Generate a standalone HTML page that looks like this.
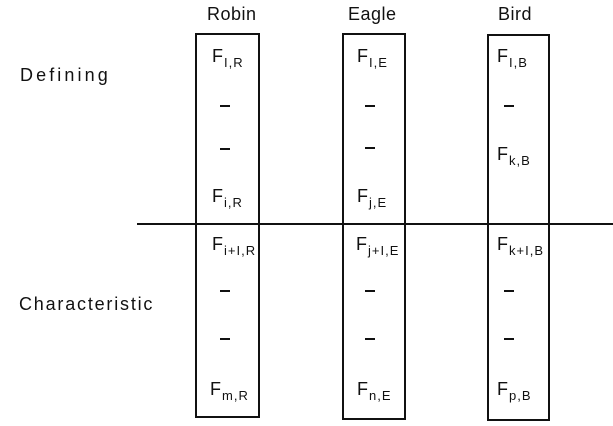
<!DOCTYPE html>
<html><head><style>
body{margin:0;width:613px;height:426px;background:#fff;position:relative;overflow:hidden;font-family:"Liberation Sans",sans-serif;color:#111}
.a{position:absolute;white-space:nowrap}
.box{position:absolute;border:2px solid #111;box-sizing:border-box}
.f{position:absolute;font-size:18px;line-height:17px;white-space:nowrap}
.f sub{font-size:13px;vertical-align:-5px;line-height:0;letter-spacing:1px;margin-left:1px}
.d{position:absolute;width:10px;height:2px;background:#111}
.h{position:absolute;font-size:18px;line-height:17px;top:6px;letter-spacing:0.5px}
</style></head><body>
<div class="h" style="left:207px">Robin</div>
<div class="h" style="left:348px">Eagle</div>
<div class="h" style="left:498px">Bird</div>
<div class="a" style="left:20px;top:65px;font-size:18px;letter-spacing:3.1px">Defining</div>
<div class="a" style="left:19px;top:294px;font-size:18px;letter-spacing:1.8px">Characteristic</div>
<div class="box" style="left:195px;top:33px;width:65px;height:385px"></div>
<div class="box" style="left:342px;top:33px;width:64px;height:387px"></div>
<div class="box" style="left:487px;top:34px;width:63px;height:387px"></div>
<div class="a" style="left:137px;top:223px;width:476px;height:2px;background:#111"></div>

<div class="f" style="left:212px;top:48px">F<sub>I,R</sub></div>
<div class="d" style="left:220px;top:105px"></div>
<div class="d" style="left:220px;top:148px"></div>
<div class="f" style="left:212px;top:188px">F<sub>i,R</sub></div>
<div class="f" style="left:212px;top:236px">F<sub>i+I,R</sub></div>
<div class="d" style="left:220px;top:290px"></div>
<div class="d" style="left:220px;top:338px"></div>
<div class="f" style="left:210px;top:381px">F<sub>m,R</sub></div>

<div class="f" style="left:357px;top:48px">F<sub>I,E</sub></div>
<div class="d" style="left:365px;top:105px"></div>
<div class="d" style="left:365px;top:147px"></div>
<div class="f" style="left:357px;top:188px">F<sub>j,E</sub></div>
<div class="f" style="left:356px;top:236px">F<sub>j+I,E</sub></div>
<div class="d" style="left:365px;top:290px"></div>
<div class="d" style="left:365px;top:338px"></div>
<div class="f" style="left:357px;top:381px">F<sub>n,E</sub></div>

<div class="f" style="left:497px;top:48px">F<sub>I,B</sub></div>
<div class="d" style="left:504px;top:105px"></div>
<div class="f" style="left:497px;top:146px">F<sub>k,B</sub></div>
<div class="f" style="left:497px;top:236px">F<sub>k+I,B</sub></div>
<div class="d" style="left:504px;top:290px"></div>
<div class="d" style="left:504px;top:338px"></div>
<div class="f" style="left:497px;top:381px">F<sub>p,B</sub></div>
</body></html>
